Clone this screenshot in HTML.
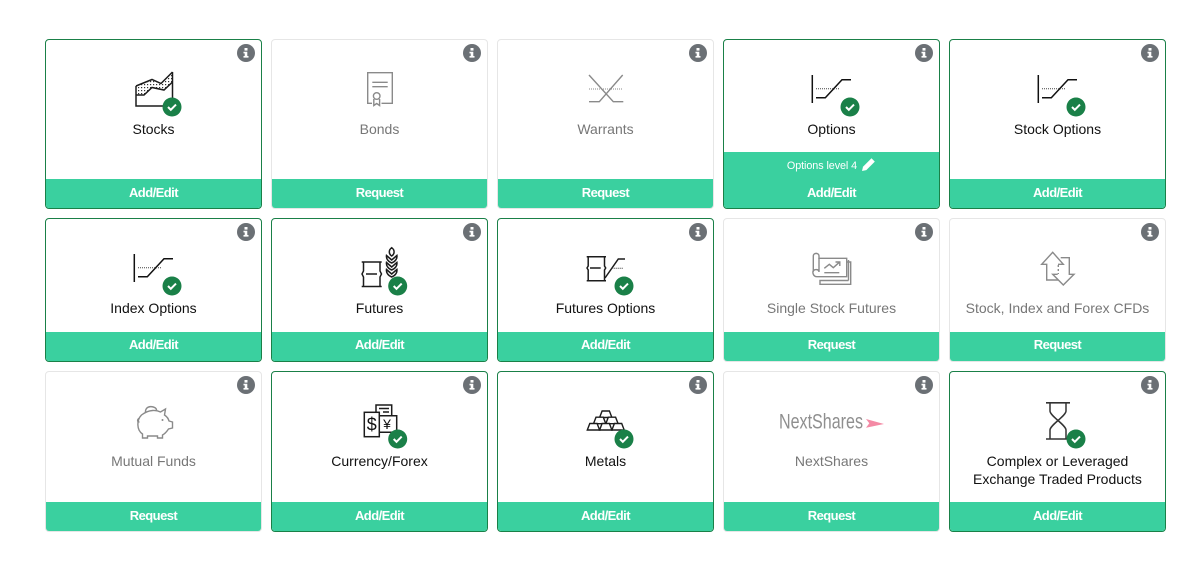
<!DOCTYPE html>
<html><head><meta charset="utf-8"><style>
html,body{margin:0;padding:0;background:#fff;width:1197px;height:572px;overflow:hidden;font-family:"Liberation Sans",sans-serif}
.c{position:absolute;width:217px;box-sizing:border-box;border:1px solid #e6e6e6;border-radius:4px;background:#fff;overflow:hidden}
.a{border-color:#1a8048}
.c>svg{position:absolute;left:-1px;top:-1px;width:217px;height:170px;overflow:visible}
.l{position:absolute;left:0;right:0;text-align:center;font-size:14px;letter-spacing:0;line-height:18px;color:#777}
.a .l{color:#111}
.f{position:absolute;left:0;right:0;bottom:0;height:29px;background:#3ad09f;color:#fff;text-align:center;font-size:13px;font-weight:bold;letter-spacing:-.55px;line-height:27px}
.r2 .f{line-height:25px}
.o{position:absolute;left:0;right:0;bottom:0;height:56px;background:#3ad09f;color:#fff;text-align:center}
.o span{position:absolute;left:0;right:0;top:6px;font-size:10.8px;letter-spacing:-.08px;line-height:17px;padding-right:19px}
.o b{position:absolute;left:0;right:0;bottom:2px;font-size:13px;letter-spacing:-.55px;line-height:27px}
svg .k{fill:none;stroke:#1c1c1c;stroke-width:1.5}
svg .g{fill:none;stroke:#8a8a8a;stroke-width:1.4}
</style></head><body>
<svg width="0" height="0" style="position:absolute"><defs>
<pattern id="dots" width="3" height="3" patternUnits="userSpaceOnUse"><rect width="1.2" height="1.2" fill="#333"/></pattern>
<g id="i"><circle cx="201" cy="14" r="9" fill="#6b7075"/><rect x="199.5" y="9" width="3" height="2.6" fill="#fff"/><path d="M198.5 12.8h3.8v4.2h1.2v1.6h-5v-1.6h1.2v-2.6h-1.2z" fill="#fff"/></g>
<g id="opt"><path d="M89.3 36v28" stroke="#111" stroke-width="1.5" fill="none"/><path d="M93 58.7h9.3L119 40.7h9" stroke="#111" stroke-width="1.5" fill="none"/><path d="M93 49.7h23" stroke="#444" stroke-width="1" stroke-dasharray="1 1" fill="none"/></g>
<g id="chk"><circle r="9.5" fill="#1a8048"/><path d="M-4 0l2.8 2.8L4 -2.4" stroke="#fff" stroke-width="2" fill="none"/></g>
<path id="bar" d="M0 0L2.500 -6.500H9.800L12.300 0Z" fill="#fff" stroke="#1c1c1c" stroke-width="1.4"/>
</defs></svg>

<!-- ROW 1 -->
<div class="c a" style="left:45px;top:39px;height:170px"><svg>
<path d="M91 56H99L107 48.500 119 51 127.500 43V33L116 44.500 107 40.500 91 47Z" fill="url(#dots)"/>
<path class="k" d="M91 47V67H127.500V33"/><path class="k" d="M91 47L107 40.500 116 44.500 127.500 33"/>
<path class="k" stroke-width="1" d="M91 56H99L107 48.500 119 51 127.500 43"/>
<use href="#i"/><use href="#chk" x="127" y="68"/></svg><div class="l" style="top:80px">Stocks</div><div class="f">Add/Edit</div></div>

<div class="c" style="left:271px;top:39px;height:170px"><svg>
<path class="g" d="M101 64.300H96.700V33.700H121.300V64.300H110.500"/><path class="g" d="M101.300 43.300H116.700M101.300 47.700H116.700"/><circle class="g" cx="105.700" cy="57" r="3.300"/><path class="g" d="M102.800 60V66.500L105.700 64.500 108.600 66.500V60"/>
<use href="#i"/></svg><div class="l" style="top:80px">Bonds</div><div class="f">Request</div></div>

<div class="c" style="left:497px;top:39px;height:170px"><svg>
<path class="g" d="M92 36L116.300 62.700H126.300M125.700 36L102.300 62.700H92"/><path d="M92 50H126" stroke="#8a8a8a" stroke-width="1" stroke-dasharray="1 1" fill="none"/>
<use href="#i"/></svg><div class="l" style="top:80px">Warrants</div><div class="f">Request</div></div>

<div class="c a" style="left:723px;top:39px;height:170px"><svg>
<use href="#opt"/><use href="#i"/><use href="#chk" x="127" y="68"/></svg><div class="l" style="top:80px">Options</div>
<div class="o"><span>Options level 4</span><svg style="position:absolute;left:0;top:0;width:215px;height:56px"><path d="M138 19l1-4.200 8.500-8.500 3.300 3.300-8.500 8.500z" fill="#fff"/></svg><b>Add/Edit</b></div></div>

<div class="c a" style="left:949px;top:39px;height:170px"><svg>
<use href="#opt"/><use href="#i"/><use href="#chk" x="127" y="68"/></svg><div class="l" style="top:80px">Stock Options</div><div class="f">Add/Edit</div></div>

<!-- ROW 2 -->
<div class="c a r2" style="left:45px;top:218px;height:144px"><svg>
<use href="#opt"/><use href="#i"/><use href="#chk" x="127" y="68"/></svg><div class="l" style="top:80px">Index Options</div><div class="f">Add/Edit</div></div>

<div class="c a r2" style="left:271px;top:218px;height:144px"><svg>
<path class="k" d="M90.700 44H110.700M90.700 68.500H110.700M92.500 44V53L91 56 92.500 59V68.500M109 44V53L110.500 56 109 59V68.500M95 56H106"/>
<path class="k" stroke-width="1.600" d="M120.700 29.700C117.500 32 117.500 36 120.700 38 123.900 36 123.900 32 120.700 29.700ZM120.700 42L115.500 37.500C115 40.500 117 43.500 120.700 45 124.400 43.500 126.400 40.500 125.900 37.500ZM120.700 49L115.500 44.500C115 47.500 117 50.500 120.700 52 124.400 50.500 126.400 47.500 125.900 44.500ZM120.700 56L115.500 51.500C115 54.500 117 57.500 120.700 59 124.400 57.500 126.400 54.500 125.900 51.500Z"/>
<use href="#i"/><use href="#chk" x="126.700" y="68"/></svg><div class="l" style="top:80px">Futures</div><div class="f">Add/Edit</div></div>

<div class="c a r2" style="left:497px;top:218px;height:144px"><svg>
<path class="k" d="M89.700 38.700H109M89.700 62.700H109M91.200 38.700V48L90 50 91.200 52V62.700M107.500 38.700V48L108.700 50 107.500 52V62.700M93 50H103.700"/>
<path class="k" d="M108 60L121.300 41H128"/><path d="M114.700 50.300H126" stroke="#333" stroke-width="1" stroke-dasharray="1 1" fill="none"/>
<use href="#i"/><use href="#chk" x="127" y="68"/></svg><div class="l" style="top:80px">Futures Options</div><div class="f">Add/Edit</div></div>

<div class="c r2" style="left:723px;top:218px;height:144px"><svg>
<path class="g" d="M90.300 38C90.300 34.500 96 34.500 96 38V40.300H123.700V58.700H94C89.500 58.700 89.500 53 90.300 53Z"/><path class="g" d="M90.300 53C91.500 51 96 51 96 54V40"/>
<path class="g" d="M123.700 44H127.700V66.300H97V62.500H125.500M125.500 42V62.500"/>
<path class="g" d="M101.300 50.300L106.300 46.300 110.300 49.700 116.300 44.300M112.500 44H116.800V48M101.300 54.700H116.300"/>
<use href="#i"/></svg><div class="l" style="top:80px">Single Stock Futures</div><div class="f">Request</div></div>

<div class="c r2" style="left:949px;top:218px;height:144px"><svg>
<path class="g" d="M109 62H97.700V46.300H92.700L103.700 34.300 114.300 46.300H109"/><path class="g" d="M111.700 39.700H120.300V56.300H125L114.300 67 103.700 56.300H108.700"/><path d="M109.300 47V56" stroke="#8a8a8a" stroke-width="1.400" stroke-dasharray="2 2" fill="none"/>
<use href="#i"/></svg><div class="l" style="top:80px">Stock, Index and Forex CFDs</div><div class="f">Request</div></div>

<!-- ROW 3 -->
<div class="c" style="left:45px;top:371px;height:161px"><svg><g transform="translate(1.500 1)">
<path class="g" d="M99 41C98 32 110 34 110 38M93 50C90 50 91 47 93 46M95 43C103 37 110 38 114 40L119 37 118 43C121 45 122 47 122.500 49L126 50V56L122 57C120 60 118 62 116 63V66H111V64H101V66H96V62C90 58 90 48 95 43Z"/>
<circle cx="116" cy="48" r="1" fill="#8a8a8a"/></g>
<use href="#i"/></svg><div class="l" style="top:80px">Mutual Funds</div><div class="f">Request</div></div>

<div class="c a" style="left:271px;top:371px;height:161px"><svg>
<path class="k" d="M105 41V34H120.700V44M108 37.500H118M112 41H118"/>
<path class="k" d="M108.300 44.700H125.700V61.300H108.300"/>
<rect x="93.300" y="41.300" width="15" height="24.400" fill="#fff" stroke="#1c1c1c" stroke-width="1.500"/>
<text x="100.800" y="59.500" text-anchor="middle" font-size="18" fill="#111" font-family="Liberation Sans">$</text>
<text x="116" y="58" text-anchor="middle" font-size="14" fill="#111" font-family="Liberation Sans">¥</text>
<use href="#i"/><use href="#chk" x="126.700" y="68"/></svg><div class="l" style="top:80px">Currency/Forex</div><div class="f">Add/Edit</div></div>

<div class="c a" style="left:497px;top:371px;height:161px"><svg>
<use href="#bar" x="102.600" y="46.500"/><use href="#bar" x="96.500" y="52.700"/><use href="#bar" x="108.800" y="52.700"/>
<use href="#bar" x="90.300" y="59"/><use href="#bar" x="102.600" y="59"/><use href="#bar" x="114.900" y="59"/>
<use href="#i"/><use href="#chk" x="127" y="68"/></svg><div class="l" style="top:80px">Metals</div><div class="f">Add/Edit</div></div>

<div class="c" style="left:723px;top:371px;height:161px"><svg>
<text x="56" y="57.300" font-size="21" textLength="84" lengthAdjust="spacingAndGlyphs" fill="#8f8f8f" font-family="Liberation Sans">NextShares</text>
<path d="M143 48L161 53 143 56.700 146.300 52.300Z" fill="#f48aa5"/>
<use href="#i"/></svg><div class="l" style="top:80px">NextShares</div><div class="f">Request</div></div>

<div class="c a" style="left:949px;top:371px;height:161px"><svg>
<path d="M97 31.800H121M97 68H121" stroke="#333" stroke-width="1.600" fill="none"/>
<path d="M101 32V40C101 45 117 54 117 59V68M117 32V40C117 45 101 54 101 59V68" stroke="#333" stroke-width="1.500" fill="none"/>
<use href="#i"/><use href="#chk" x="127" y="68"/></svg><div class="l" style="top:80px">Complex or Leveraged<br>Exchange Traded Products</div><div class="f">Add/Edit</div></div>
</body></html>
